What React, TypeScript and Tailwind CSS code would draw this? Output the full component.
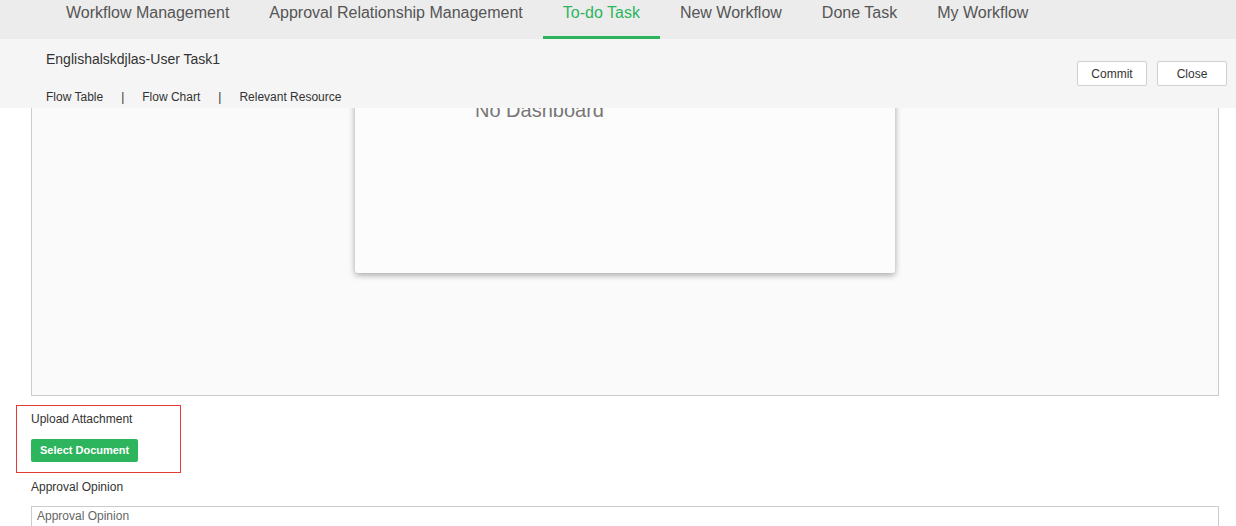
import React from 'react';

const tabs = ['Workflow Management', 'Approval Relationship Management', 'To-do Task', 'New Workflow', 'Done Task', 'My Workflow'];

export default function App() {
  return (
    <div className="w-[1236px] h-[526px] overflow-hidden bg-white text-[#333]" style={{ fontFamily: '"Liberation Sans", Arial, sans-serif' }}>
      {/* top nav */}
      <div className="h-[39px] bg-[#ececec] flex pl-[46px]">
        {tabs.map((t) => {
          const active = t === 'To-do Task';
          return (
            <div
              key={t}
              className={
                active
                  ? 'px-[20px] h-[39px] text-[16px] leading-[25px] text-[#2db55d] border-b-[3px] border-[#2db55d]'
                  : 'px-[20px] h-[39px] text-[16px] leading-[25px] text-[#555]'
              }
            >
              {t}
            </div>
          );
        })}
      </div>

      {/* task header */}
      <div className="h-[69px] bg-[#f5f5f5] flex justify-between pl-[46px] pr-[9px]">
        <div>
          <div className="pt-[11px] text-[14px] leading-[18px] text-[#333]">Englishalskdjlas-User Task1</div>
          <div className="mt-[21px] flex text-[12px] leading-[16px] text-[#333]">
            <span>Flow Table</span>
            <span className="mx-[18px]">|</span>
            <span>Flow Chart</span>
            <span className="mx-[18px]">|</span>
            <span>Relevant Resource</span>
          </div>
        </div>
        <div className="flex gap-[10px] pt-[22px]">
          <button className="w-[70px] h-[25px] bg-white border border-[#d0d0d0] rounded-[2px] text-[12px] text-[#333]">Commit</button>
          <button className="w-[70px] h-[25px] bg-white border border-[#d0d0d0] rounded-[2px] text-[12px] text-[#333]">Close</button>
        </div>
      </div>

      {/* dashboard frame, scrolled under the header */}
      <div className="h-[288px] overflow-hidden">
        <div className="-mt-[60px] ml-[31px] mr-[17px] h-[348px] border border-[#cccccc] bg-[#fafafa] pt-[24px]">
          <div className="mx-auto w-[540px] h-[200px] bg-[#fcfcfc] rounded-[3px] shadow-[0_2px_6px_rgba(0,0,0,0.35)] pt-[25px] pl-[120px]">
            <div className="text-[20px] leading-[24px] text-[#777]">No Dashboard</div>
          </div>
        </div>
      </div>

      {/* upload */}
      <div className="mt-[9px] ml-[16px] w-[165px] h-[68px] border border-[#e53935] pl-[14px] pt-[5px]">
        <div className="text-[12px] leading-[16px] text-[#333]">Upload Attachment</div>
        <button className="mt-[12px] h-[23px] px-[9px] bg-[#2db55d] rounded-[2px] text-white text-[11px] font-bold">Select Document</button>
      </div>

      <div className="mt-[6px] ml-[31px] text-[12px] leading-[16px] text-[#333]">Approval Opinion</div>
      <div className="mt-[11px] ml-[31px] mr-[17px] h-[60px] border border-[#cccccc] px-[5px] pt-[1px] text-[12px] leading-[16px] text-[#666]">
        Approval Opinion
      </div>
    </div>
  );
}
